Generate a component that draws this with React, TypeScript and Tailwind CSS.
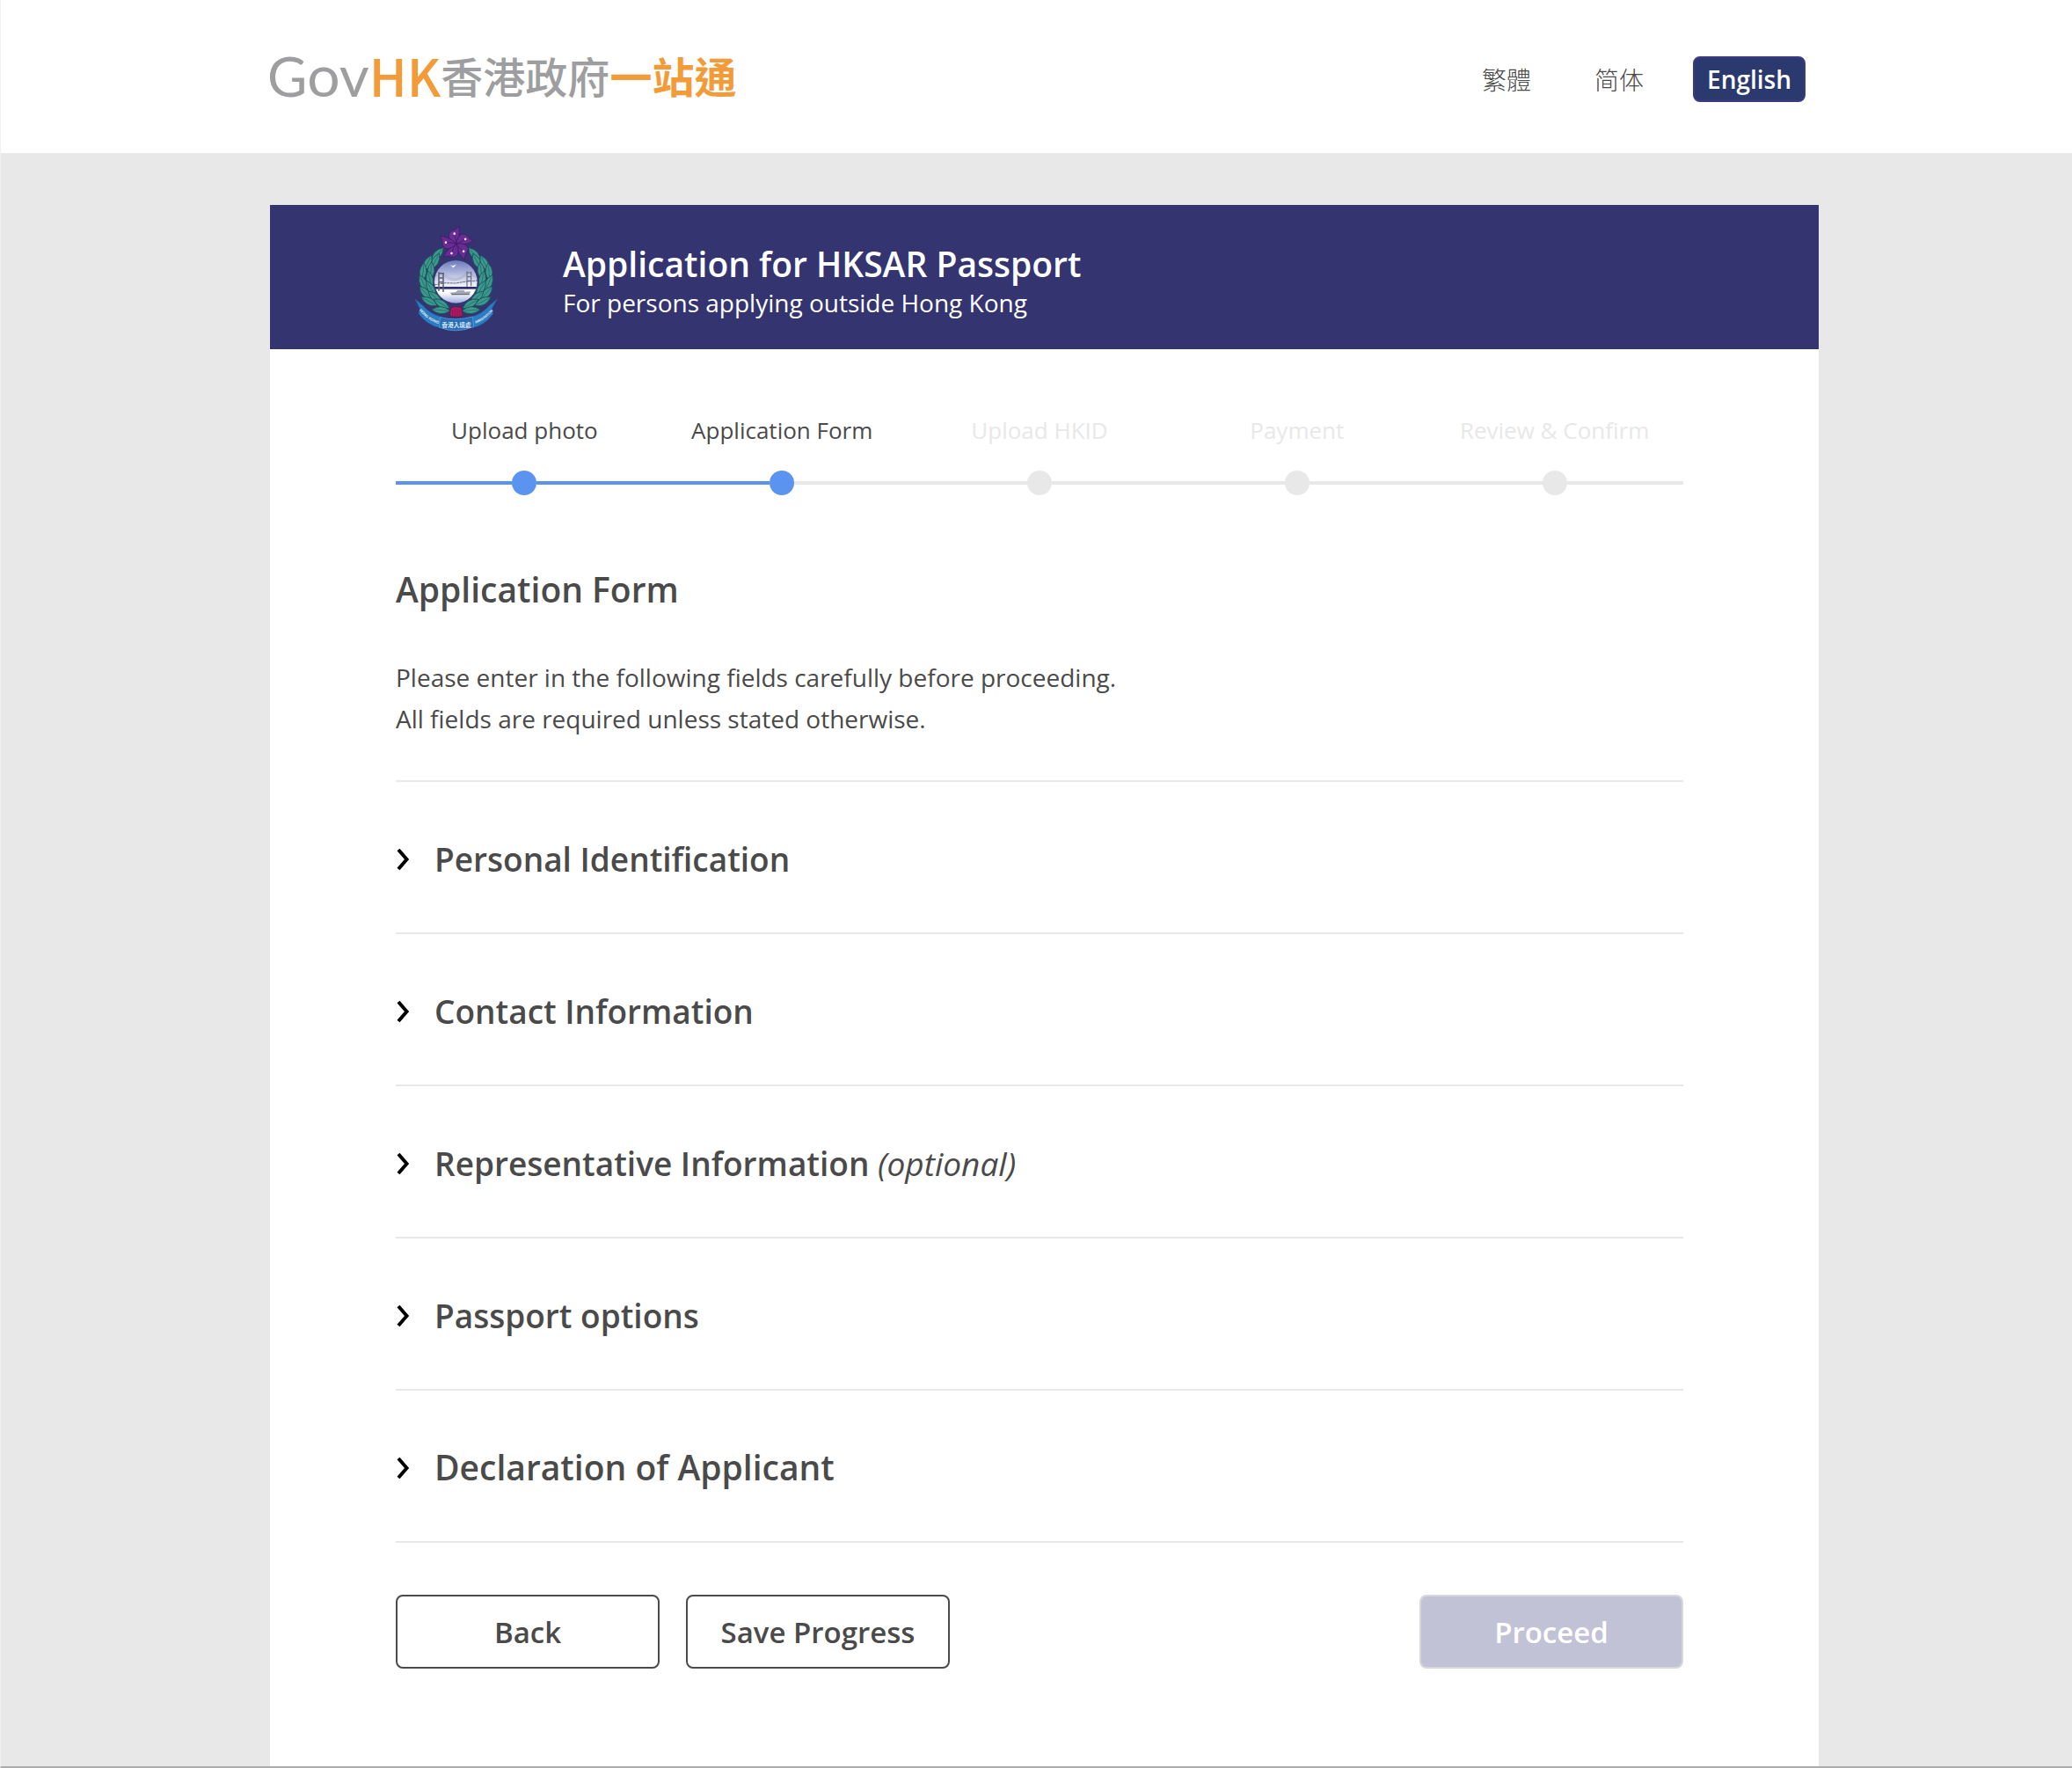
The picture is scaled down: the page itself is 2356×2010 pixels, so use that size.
import React from "react";

const steps = [
  { label: "Upload photo", done: true },
  { label: "Application Form", done: true },
  { label: "Upload HKID", done: false },
  { label: "Payment", done: false },
  { label: "Review & Confirm", done: false },
];

const sections = [
  { title: "Personal Identification", optional: false, large: false },
  { title: "Contact Information", optional: false, large: false },
  { title: "Representative Information", optional: true, large: false },
  { title: "Passport options", optional: false, large: false },
  { title: "Declaration of Applicant", optional: false, large: true },
];

// Each leaf of the wreath's left half: centre x, centre y, rotation.
const leaves = [
  [142, 148, -48],
  [134, 172, -62],
  [108, 178, -62],
  [120, 204, -84],
  [93, 208, -84],
  [116, 234, 78],
  [94, 246, 66],
  [120, 264, 60],
  [102, 280, 48],
  [134, 294, 42],
  [114, 308, 28],
  [156, 316, 30],
  [154, 338, 4],
];

function Wreath() {
  return (
    <g fill="#3a9a8c" stroke="#1d4f5c" strokeWidth="2.5">
      {leaves.map(([x, y, r]) => (
        <g key={`${x}-${y}`} transform={`translate(${x} ${y}) rotate(${r})`}>
          <path d="M-31 0 Q0 -24 31 0 Q0 24 -31 0Z" />
          <path d="M-22 0 H22" strokeWidth="1.5" />
        </g>
      ))}
    </g>
  );
}

function Crest() {
  return (
    <svg viewBox="0 0 420 450" className="h-[150px] w-[140px] shrink-0" role="img" aria-label="Hong Kong Immigration crest">
      <defs>
        <linearGradient id="sky" x1="0" y1="0" x2="0" y2="1">
          <stop offset="0" stopColor="#6a78bd" />
          <stop offset="0.55" stopColor="#e8eaf5" />
          <stop offset="0.75" stopColor="#ffffff" />
          <stop offset="1" stopColor="#9aa8dc" />
        </linearGradient>
        <clipPath id="disc">
          <circle cx="205" cy="241" r="74" />
        </clipPath>
        <path id="ribbonLeft" d="M80 338 Q106 372 150 386" />
        <path id="ribbonRight" d="M272 383 Q308 370 336 334" />
      </defs>

      <Wreath />
      <g transform="translate(411 0) scale(-1 1)">
        <Wreath />
      </g>

      <circle cx="205" cy="241" r="74" fill="url(#sky)" stroke="#2b2f72" strokeWidth="2" />
      <g clipPath="url(#disc)">
        <path d="M131 252 L168 245 L205 246 L240 240 L280 237" stroke="#4a4f66" strokeWidth="2.5" fill="none" strokeDasharray="9 2" />
        <path d="M131 226 L154 212 Q200 262 250 208 L280 232" stroke="#9299b5" strokeWidth="1.5" fill="none" />
        <path d="M164 214 Q204 252 241 210" stroke="#9299b5" strokeWidth="1.5" fill="none" />
        <rect x="131" y="258" width="150" height="8" fill="#2b2f72" />
        <path d="M147 208 V272 M162 210 V276 M145 212 H165 M147 228 H163 M147 242 H163" stroke="#5a5f70" strokeWidth="4.5" fill="none" />
        <path d="M243 205 V258 M257 206 V256 M241 210 H259 M243 224 H257 M243 238 H257" stroke="#6a6f82" strokeWidth="3.5" fill="none" />
        <path d="M184 185 L196 186 L206 182 L201 189 L193 194 L194 189Z" fill="#fff" />
        <path d="M184 278 L206 276 L210 270 L232 269 L236 275 L256 274 L250 285 L192 286Z" fill="#a4a7b4" />
        <path d="M190 284 H251" stroke="#5b5f70" strokeWidth="3" />
      </g>

      <g stroke="#3a1760" strokeWidth="2" fill="#682c93">
        {[0, 72, 144, 216, 288].map((r) => (
          <g key={r} transform={`rotate(${r} 206 112)`}>
            <path d="M206 112 C192 104 175 92 182 76 C188 63 205 68 214 51 C219 66 218 92 206 112Z" />
            <path d="M206 112 Q207 94 200 80" fill="none" strokeWidth="2" />
            <circle cx="200" cy="77" r="4" fill="#f3e6f7" stroke="none" />
          </g>
        ))}
      </g>

      <path d="M66 300 L92 322 Q118 352 158 362 L152 398 Q108 390 78 350 L82 332Z" fill="#2d7cc1" stroke="#1f5d9c" strokeWidth="2" />
      <path d="M346 300 L320 322 Q294 352 254 362 L260 398 Q304 390 332 350 L328 332Z" fill="#2d7cc1" stroke="#1f5d9c" strokeWidth="2" />
      <path d="M152 362 Q206 376 262 360 L266 394 Q206 420 148 396Z" fill="#2a6db5" stroke="#5a9bd4" strokeWidth="2.5" />
      <path d="M188 330 Q206 322 224 330 L228 356 L216 360 H196 L184 356Z" fill="#b01a62" stroke="#5c1646" strokeWidth="2" />
      <path d="M194 336 V356 M202 334 V358 M210 334 V358 M218 336 V356" stroke="#7c1450" strokeWidth="2" />

      <g fill="#e6f3fb" fontFamily="'Liberation Sans', sans-serif" fontWeight="700">
        <text fontSize="13">
          <textPath href="#ribbonLeft">HONG KONG</textPath>
        </text>
        <text fontSize="11">
          <textPath href="#ribbonRight">IMMIGRATION</textPath>
        </text>
      </g>
      <text x="207" y="395" textAnchor="middle" fontSize="20" fontWeight="700" fill="#d6e9f7" fontFamily="'Noto Sans CJK TC', sans-serif">
        香港入境處
      </text>
    </svg>
  );
}

function Logo() {
  return (
    <a
      href="#home"
      aria-label="GovHK 香港政府一站通"
      className="mb-1 flex items-center whitespace-nowrap font-['Lato',sans-serif] leading-none text-[#9e9ea0]"
    >
      <span className="flex items-baseline">
        <span className="text-[62px]">G</span>
        <span className="text-[66px]">ov</span>
        <span className="font-['Noto_Sans_CJK_TC',sans-serif] text-[58px] font-medium text-[#f29b38]">HK</span>
      </span>
      <span className="font-['Noto_Sans_CJK_TC',sans-serif] text-5xl font-medium">
        香港政府<span className="font-bold text-[#f29b38]">一站通</span>
      </span>
    </a>
  );
}

export default function App() {
  return (
    <div className="flex min-h-screen flex-col border-b-2 border-l border-b-[#acacac] border-l-[#f1f1f1] bg-[#e8e8e8] font-['Open_Sans','Noto_Sans_CJK_TC',sans-serif] text-[#4a4a4a]">
      <header className="flex h-[174px] items-center justify-between bg-white px-[303px]">
        <Logo />
        <nav aria-label="Language" className="mt-1.5 flex items-center gap-10 text-[28px] leading-[48px]">
          <a href="#tc" lang="zh-Hant" className="px-4 font-['Noto_Sans_CJK_TC',sans-serif] font-light">繁體</a>
          <a href="#sc" lang="zh-Hans" className="px-4 font-['Noto_Sans_CJK_SC',sans-serif] font-light">简体</a>
          <a href="#en" aria-current="true" className="rounded-lg border-2 border-[#3c3a80] bg-[#2b3a6e] px-3.5 font-semibold text-white">
            English
          </a>
        </nav>
      </header>

      <main className="mt-[59px] mr-[288px] ml-[306px] flex flex-1 flex-col bg-white">
        <div className="flex h-[164px] items-start gap-[50px] bg-[#343570] pt-[7px] pl-[143px] text-white">
          <Crest />
          <div className="pt-[34px]">
            <p className="text-[39px] leading-[52px] font-semibold">Application for HKSAR Passport</p>
            <p className="text-[28px] leading-9">For persons applying outside Hong Kong</p>
          </div>
        </div>

        <div className="pt-[74px] pr-[154px] pb-20 pl-[143px]">
          <ol className="grid grid-cols-5">
            {steps.map((step, i) => (
              <li key={step.label} className={step.done ? "" : "text-[#e8e8e8]"}>
                <div className="text-center text-[26px] leading-9 whitespace-nowrap">{step.label}</div>
                <div className="mt-7 flex items-center">
                  <span className={step.done ? "h-1 flex-1 bg-[#5b94f0]" : "h-1 flex-1 bg-[#e8e8e8]"} />
                  <span className={step.done ? "size-7 rounded-full bg-[#5b94f0]" : "size-7 rounded-full bg-[#e8e8e8]"} />
                  <span className={i === 0 ? "h-1 flex-1 bg-[#5b94f0]" : "h-1 flex-1 bg-[#e8e8e8]"} />
                </div>
              </li>
            ))}
          </ol>

          <h1 className="mt-[81px] text-[39px] leading-[52px] font-semibold">Application Form</h1>
          <p className="mt-[51px] text-[28px] leading-[47px]">
            Please enter in the following fields carefully before proceeding.
            <br />
            All fields are required unless stated otherwise.
          </p>

          <div className="mt-[46px] border-t-2 border-[#e8e8e8]">
            {sections.map((section) => (
              <h2
                key={section.title}
                className={
                  section.large
                    ? "border-b-2 border-[#e8e8e8] text-[39px] font-semibold"
                    : "border-b-2 border-[#e8e8e8] text-[37px] font-semibold"
                }
              >
                <button type="button" aria-expanded="false" className="flex h-[171px] w-full items-center gap-7 pt-1 text-left">
                  <svg viewBox="0 0 16 26" className="h-[26px] w-4 shrink-0" aria-hidden="true">
                    <path d="M3 2 L12.5 13 L3 24" fill="none" stroke="#000" strokeWidth="4" />
                  </svg>
                  <span>
                    {section.title}
                    {section.optional && <em className="font-normal"> (optional)</em>}
                  </span>
                </button>
              </h2>
            ))}
          </div>

          <div className="mt-[59px] flex gap-[30px] text-[33px] font-semibold">
            <button type="button" className="h-[84px] w-[300px] rounded-lg border-2 border-[#4a4a4a] pt-0.5">Back</button>
            <button type="button" className="h-[84px] w-[300px] rounded-lg border-2 border-[#4a4a4a] pt-0.5">Save Progress</button>
            <button type="button" disabled className="ml-auto h-[84px] w-[300px] rounded-lg border-2 border-[#d8d8dc] bg-[#c2c2d6] pt-0.5 text-white">
              Proceed
            </button>
          </div>
        </div>
      </main>
    </div>
  );
}
